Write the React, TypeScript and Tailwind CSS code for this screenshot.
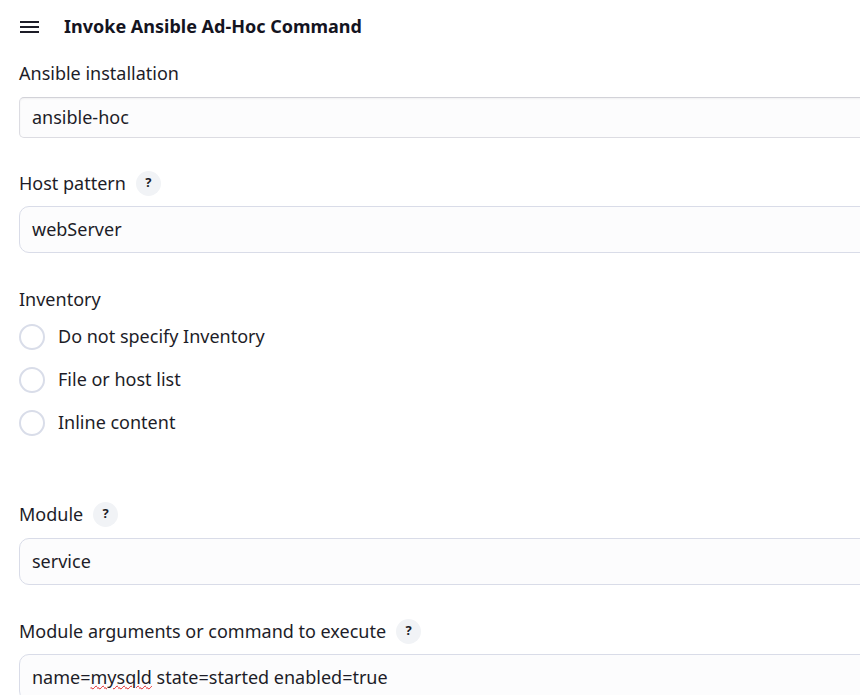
import React from "react";

const font = { fontFamily: '"Noto Sans", "Open Sans", sans-serif' };

const HelpButton = () => (
  <span className="ml-[10px] inline-flex h-[25px] w-[25px] items-center justify-center rounded-full bg-[#f1f3f6] text-[13px] font-bold text-[#1d1d28]">
    ?
  </span>
);

const Label = ({ children, help }: { children: React.ReactNode; help?: boolean }) => (
  <div className="flex h-[26px] items-center text-[18px] text-[#1d1d28]">
    <span>{children}</span>
    {help && <HelpButton />}
  </div>
);

const TextField = ({ value, select }: { value: React.ReactNode; select?: boolean }) => (
  <div
    className={
      select
        ? "flex h-[41px] w-[900px] items-center rounded-[5px] border border-[#dcdce2] border-t-[#d2d2d8] bg-[#fcfcfd] pl-[12px] text-[18px] text-[#1d1d28] shadow-[inset_0_1px_2px_rgba(0,0,0,0.05)]"
        : "flex h-[47px] w-[900px] items-center rounded-[10px] border border-[#d9dce8] bg-[#fcfcfd] pl-[12px] text-[18px] text-[#1d1d28]"
    }
  >
    {value}
  </div>
);

const Radio = ({ label }: { label: string }) => (
  <div className="flex h-[27px] items-center">
    <span className="h-[26px] w-[26px] rounded-full border-2 border-[#d9dde9] bg-white" />
    <span className="ml-[13px] text-[18px] text-[#1d1d28]">{label}</span>
  </div>
);

export default function App() {
  return (
    <div className="h-[695px] w-[860px] overflow-hidden bg-white" style={font}>
      <div className="flex h-[52px] items-center pl-[20px]">
        <svg width="19" height="12" viewBox="0 0 19 12" className="mt-[1px]">
          <rect x="0" y="0" width="19" height="2" fill="#1d1d28" />
          <rect x="0" y="5" width="19" height="2" fill="#1d1d28" />
          <rect x="0" y="10" width="19" height="2" fill="#1d1d28" />
        </svg>
        <span className="ml-[25px] text-[18px] font-bold text-[#14141f]">
          Invoke Ansible Ad-Hoc Command
        </span>
      </div>

      <div className="flex flex-col pl-[19px]">
        <div className="mt-[8px]">
          <Label>Ansible installation</Label>
        </div>
        <div className="mt-[11px]">
          <TextField value="ansible-hoc" select />
        </div>

        <div className="mt-[32px]">
          <Label help>Host pattern</Label>
        </div>
        <div className="mt-[10px]">
          <TextField value="webServer" />
        </div>

        <div className="mt-[33px]">
          <Label>Inventory</Label>
        </div>
        <div className="mt-[11px] flex flex-col gap-[16px]">
          <Radio label="Do not specify Inventory" />
          <Radio label="File or host list" />
          <Radio label="Inline content" />
        </div>

        <div className="mt-[65px]">
          <Label help>Module</Label>
        </div>
        <div className="mt-[11px]">
          <TextField value="service" />
        </div>

        <div className="mt-[33px]">
          <Label help>Module arguments or command to execute</Label>
        </div>
        <div className="mt-[10px]">
          <TextField
            value={
              <span>
                name=
                <span className="underline decoration-wavy decoration-[#e02020] decoration-[1px] underline-offset-[1px]">
                  mysqld
                </span>{" "}
                state=started enabled=true
              </span>
            }
          />
        </div>
      </div>
    </div>
  );
}
